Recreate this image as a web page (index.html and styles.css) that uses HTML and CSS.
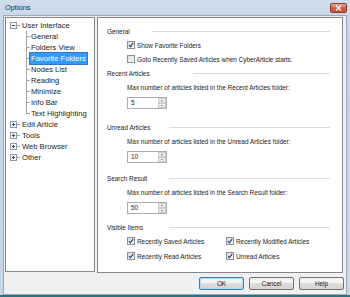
FILE: index.html
```html
<!DOCTYPE html>
<html lang="en">
<head>
  <meta charset="UTF-8">
  <title>Options</title>
  <link rel="stylesheet" href="styles.css">
</head>
<body>
  <div class="window">
    <!-- Barra de título -->
    <div class="titlebar">
      <span class="title">Options</span>
      <span class="close">
        <svg width="9" height="6" viewBox="0 0 9 6"><path d="M2 0.5 L7 5.5 M7 0.5 L2 5.5" stroke="#fff" stroke-width="1.4"/></svg>
      </span>
    </div>

    <div class="client">
      <div class="main">
        <!-- Árbol de categorías -->
        <div class="tree">
          <div class="node">
            <span class="expander">
              <svg width="7" height="7" viewBox="0 0 7 7"><rect x="0.5" y="0.5" width="6" height="6" fill="#f4f4f4" stroke="#8c9aa8"/><path d="M2 3.5 H5" stroke="#3a4a66"/></svg>
            </span>
            <span class="tick"></span>
            <span class="label">User Interface</span>
          </div>
          <div class="children">
            <div class="child"><span class="label">General</span></div>
            <div class="child"><span class="label">Folders View</span></div>
            <div class="child"><span class="label selected">Favorite Folders</span></div>
            <div class="child"><span class="label">Nodes List</span></div>
            <div class="child"><span class="label">Reading</span></div>
            <div class="child"><span class="label">Minimize</span></div>
            <div class="child"><span class="label">Info Bar</span></div>
            <div class="child child-last"><span class="label">Text Highlighting</span></div>
          </div>
          <div class="node">
            <span class="expander">
              <svg width="7" height="7" viewBox="0 0 7 7"><rect x="0.5" y="0.5" width="6" height="6" fill="#f4f4f4" stroke="#8c9aa8"/><path d="M2 3.5 H5 M3.5 2 V5" stroke="#3a4a66"/></svg>
            </span>
            <span class="tick"></span>
            <span class="label">Edit Article</span>
          </div>
          <div class="node">
            <span class="expander">
              <svg width="7" height="7" viewBox="0 0 7 7"><rect x="0.5" y="0.5" width="6" height="6" fill="#f4f4f4" stroke="#8c9aa8"/><path d="M2 3.5 H5 M3.5 2 V5" stroke="#3a4a66"/></svg>
            </span>
            <span class="tick"></span>
            <span class="label">Tools</span>
          </div>
          <div class="node">
            <span class="expander">
              <svg width="7" height="7" viewBox="0 0 7 7"><rect x="0.5" y="0.5" width="6" height="6" fill="#f4f4f4" stroke="#8c9aa8"/><path d="M2 3.5 H5 M3.5 2 V5" stroke="#3a4a66"/></svg>
            </span>
            <span class="tick"></span>
            <span class="label">Web Browser</span>
          </div>
          <div class="node">
            <span class="expander">
              <svg width="7" height="7" viewBox="0 0 7 7"><rect x="0.5" y="0.5" width="6" height="6" fill="#f4f4f4" stroke="#8c9aa8"/><path d="M2 3.5 H5 M3.5 2 V5" stroke="#3a4a66"/></svg>
            </span>
            <span class="tick"></span>
            <span class="label">Other</span>
          </div>
        </div>

        <!-- Página de opciones -->
        <div class="page">
          <div class="header header-general"><span class="header-text">General</span><span class="rule"></span></div>
          <div class="indent">
            <label class="check"><span class="box"><svg width="6" height="6" viewBox="0 0 6 6"><path d="M1 3 L2.4 4.8 L5.2 0.8" fill="none" stroke="#21418a" stroke-width="1.2"/></svg></span>Show Favorite Folders</label>
            <label class="check"><span class="box"></span>Goto Recently Saved Articles when CyberArticle starts.</label>
          </div>

          <div class="section section-recent">
            <div class="header header-recent"><span class="header-text">Recent Articles</span><span class="rule"></span></div>
            <div class="indent">
              <div class="caption">Max number of articles listed in the Recent Articles folder:</div>
              <div class="spin"><span class="spin-value">5</span><span class="spin-buttons"><span class="spin-up"></span><span class="spin-down"></span></span></div>
            </div>
          </div>

          <div class="section section-unread">
            <div class="header header-unread"><span class="header-text">Unread Articles</span><span class="rule"></span></div>
            <div class="indent">
              <div class="caption">Max number of articles listed in the Unread Articles folder:</div>
              <div class="spin"><span class="spin-value">10</span><span class="spin-buttons"><span class="spin-up"></span><span class="spin-down"></span></span></div>
            </div>
          </div>

          <div class="section">
            <div class="header header-search"><span class="header-text">Search Result</span><span class="rule"></span></div>
            <div class="indent">
              <div class="caption">Max number of articles listed in the Search Result folder:</div>
              <div class="spin"><span class="spin-value">50</span><span class="spin-buttons"><span class="spin-up"></span><span class="spin-down"></span></span></div>
            </div>
          </div>

          <div class="section section-visible">
            <div class="header header-visible"><span class="header-text">Visible Items</span><span class="rule"></span></div>
            <div class="indent visible-grid">
              <label class="check"><span class="box"><svg width="6" height="6" viewBox="0 0 6 6"><path d="M1 3 L2.4 4.8 L5.2 0.8" fill="none" stroke="#21418a" stroke-width="1.2"/></svg></span>Recently Saved Articles</label>
              <label class="check"><span class="box"><svg width="6" height="6" viewBox="0 0 6 6"><path d="M1 3 L2.4 4.8 L5.2 0.8" fill="none" stroke="#21418a" stroke-width="1.2"/></svg></span>Recently Modified Articles</label>
              <label class="check"><span class="box"><svg width="6" height="6" viewBox="0 0 6 6"><path d="M1 3 L2.4 4.8 L5.2 0.8" fill="none" stroke="#21418a" stroke-width="1.2"/></svg></span>Recently Read Articles</label>
              <label class="check"><span class="box"><svg width="6" height="6" viewBox="0 0 6 6"><path d="M1 3 L2.4 4.8 L5.2 0.8" fill="none" stroke="#21418a" stroke-width="1.2"/></svg></span>Unread Articles</label>
            </div>
          </div>
        </div>
      </div>

      <!-- Botones -->
      <div class="buttons">
        <span class="button button-default">OK</span>
        <span class="button">Cancel</span>
        <span class="button">Help</span>
      </div>
    </div>
  </div>
</body>
</html>
```

FILE: styles.css
```css
/* Estilos generales */
body {
  margin: 0;
  font-family: 'Liberation Sans', Arial, sans-serif;
  color: #1b1b1b;
}

.window {
  width: 350px;
  height: 297px;
  box-sizing: border-box;
  background: linear-gradient(#cfdceb, #c4d4e6 40px, #c9d6e4);
  border-bottom: 2px solid #2f6f7e;
  padding: 0 3px;
  display: flex;
  flex-direction: column;
}

/* Barra de título */
.titlebar {
  height: 15px;
  flex: none;
  display: flex;
  align-items: center;
  justify-content: space-between;
  padding: 0 0 0 2px;
}

.title {
  font-size: 7.4px;
  color: #1e2a3a;
}

.close {
  width: 17px;
  height: 10px;
  box-sizing: border-box;
  border: 1px solid #8a3a30;
  border-radius: 2px;
  background: linear-gradient(#e8a496, #cf5a45 55%, #c9503c);
  display: flex;
  align-items: center;
  justify-content: center;
}

/* Área cliente */
.client {
  flex: 1;
  background: #f0f0f0;
  border: 1px solid #9aabbe;
  display: flex;
  flex-direction: column;
}

.main {
  display: flex;
  gap: 2px;
  padding: 1px 2px 0 1px;
}

/* Árbol */
.tree {
  width: 90px;
  height: 255px;
  box-sizing: border-box;
  background: #fff;
  border: 1px solid #828790;
  padding-top: 2px;
  font-size: 7.6px;
}

.node {
  height: 11px;
  display: flex;
  align-items: center;
  padding-left: 4px;
}

.expander {
  width: 7px;
  height: 7px;
  display: flex;
}

.tick {
  width: 3px;
  height: 1px;
  background: #a5a5a5;
  margin-right: 1px;
}

.label {
  white-space: nowrap;
  line-height: 11px;
  padding: 0 1px;
}

.children {
  margin-left: 20px;
}

.child {
  height: 11px;
  display: flex;
  align-items: center;
  padding-left: 4px;
  background:
    linear-gradient(#a5a5a5, #a5a5a5) 0 0 / 1px 100% no-repeat,
    linear-gradient(#a5a5a5, #a5a5a5) 0 50% / 4px 1px no-repeat;
}

.child-last {
  background:
    linear-gradient(#a5a5a5, #a5a5a5) 0 0 / 1px 50% no-repeat,
    linear-gradient(#a5a5a5, #a5a5a5) 0 50% / 4px 1px no-repeat;
}

.selected {
  background: #3399ff;
  color: #fff;
  outline: 1px solid #2a7ad0;
}

/* Página de opciones */
.page {
  width: 246px;
  height: 256px;
  box-sizing: border-box;
  background: #fff;
  border: 1px solid #828790;
  padding: 7px 12px 0 9px;
  font-size: 6.4px;
}

.header {
  height: 14px;
  display: flex;
  align-items: center;
}

.header-general {
  height: 13px;
}

.header-text {
  white-space: nowrap;
  flex: none;
}

.header-general .header-text { width: 45px; }
.header-recent .header-text { width: 86px; }
.header-unread .header-text,
.header-search .header-text,
.header-visible .header-text { width: 62px; }

.rule {
  flex: 1;
  height: 1px;
  background: #d5dbe1;
}

.indent {
  margin-left: 20px;
}

.check {
  height: 14px;
  display: flex;
  align-items: center;
  white-space: nowrap;
}

.box {
  width: 8px;
  height: 8px;
  box-sizing: border-box;
  border: 1px solid #8e8f8f;
  background: linear-gradient(135deg, #dcdcdc, #fcfcfc);
  margin-right: 2px;
  display: flex;
  align-items: center;
  justify-content: center;
}

.section {
  margin-top: 8px;
}

.section-recent {
  margin-top: 0;
}

.section-unread {
  margin-top: 11px;
}

.section-visible {
  margin-top: 7px;
}

.section-visible .header {
  height: 13px;
}

.caption {
  height: 14px;
  line-height: 14px;
  margin-top: 1px;
  white-space: nowrap;
}

.spin {
  width: 40px;
  height: 12px;
  box-sizing: border-box;
  margin-top: 2px;
  border: 1px solid #abadb3;
  background: #fff;
  display: flex;
}

.spin-value {
  flex: 1;
  padding-left: 3px;
  line-height: 10px;
}

.spin-buttons {
  width: 8px;
  display: flex;
  flex-direction: column;
}

.spin-up, .spin-down {
  flex: 1;
  box-sizing: border-box;
  border: 1px solid #c9cdd3;
  background: linear-gradient(#f6f6f6, #e2e4e8);
  display: flex;
  align-items: center;
  justify-content: center;
}

.spin-up::after {
  content: '';
  border-left: 1.5px solid transparent;
  border-right: 1.5px solid transparent;
  border-bottom: 1.5px solid #3b3b3b;
}

.spin-down::after {
  content: '';
  border-left: 1.5px solid transparent;
  border-right: 1.5px solid transparent;
  border-top: 1.5px solid #3b3b3b;
}

.visible-grid {
  display: grid;
  grid-template-columns: 99px auto;
  row-gap: 1px;
}

/* Botones */
.buttons {
  display: flex;
  justify-content: flex-end;
  gap: 5px;
  padding: 4px 2px 0 0;
}

.button {
  width: 45px;
  height: 13px;
  box-sizing: border-box;
  border: 1px solid #707070;
  border-radius: 2px;
  background: linear-gradient(#f4f4f4 45%, #dddddd 50%, #d3d3d3);
  font-size: 6.4px;
  display: flex;
  align-items: center;
  justify-content: center;
}

.button-default {
  border-color: #3c7fb1;
  box-shadow: inset 0 0 0 1px #a8d8f2;
}
```
